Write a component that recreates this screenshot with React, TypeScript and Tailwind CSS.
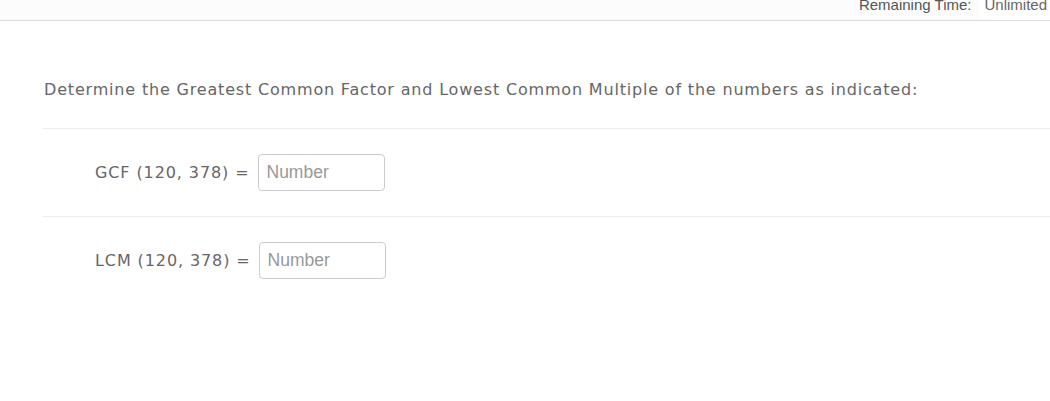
import React from 'react';

const rows = [
  { label: 'GCF (120, 378) =' },
  { label: 'LCM (120, 378) =' },
];

export default function App() {
  return (
    <div className="min-h-[401px] w-full bg-white">
      {/* top bar */}
      <div className="flex h-[21px] justify-end overflow-hidden border-b border-[#dcdcdc] bg-[#fcfcfc] font-['Liberation_Sans',Arial,sans-serif] text-[15px] text-[#555]">
        <span className="-mt-[3px] block leading-[15px]">Remaining Time:</span>
        <span className="-mt-[3px] ml-[8px] block bg-white pl-[5px] pr-[3px] leading-[15px] text-[#666]">
          Unlimited
        </span>
      </div>

      <div className="pl-[43px] pt-[57px] font-['DejaVu_Sans',Verdana,sans-serif] text-[#666]">
        <p className="pl-[1px] text-[16px] leading-[24px] tracking-[0.82px]">
          Determine the Greatest Common Factor and Lowest Common Multiple of the numbers as indicated:
        </p>

        <div className="mt-[26px]">
          {rows.map((r) => (
            <div key={r.label} className="border-t border-[#ececec] py-[25px] pl-[52px]">
              <div className="flex items-center">
                <span className="text-[16px] tracking-[0.9px]">{r.label}</span>
                <input
                  type="text"
                  placeholder="Number"
                  className="ml-[8px] h-[37px] w-[127px] rounded-[4px] border border-[#ccc] px-[8px] font-['Liberation_Sans',Arial,sans-serif] text-[17.5px] text-[#555] placeholder:text-[#999] focus:outline-none"
                />
              </div>
            </div>
          ))}
        </div>
      </div>
    </div>
  );
}
